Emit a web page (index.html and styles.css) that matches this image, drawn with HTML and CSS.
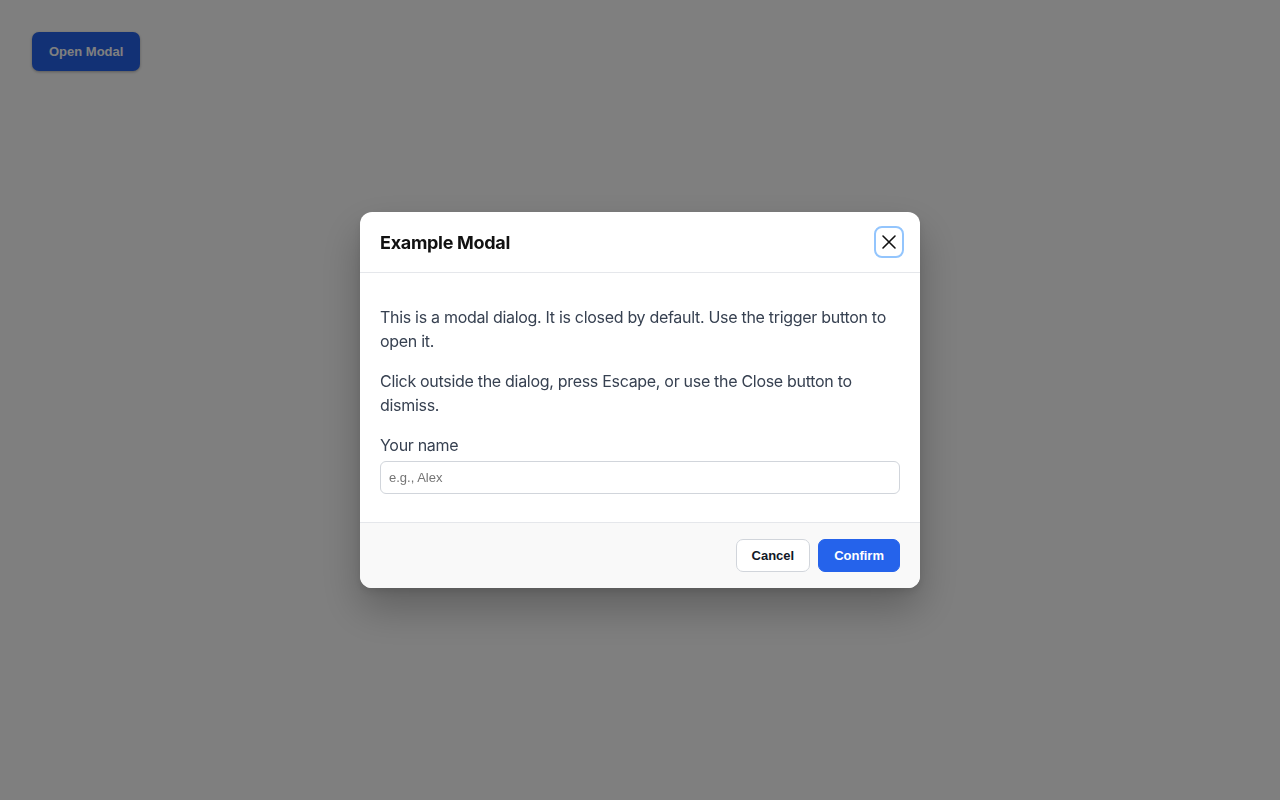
FILE: index.html
```html
<!DOCTYPE html>
<html lang="en">
  <head>
    <meta charset="UTF-8" />
    <meta name="viewport" content="width=device-width, initial-scale=1.0" />
    <title>Modal Example</title>
    <link rel="stylesheet" href="styles.css">
  </head>
  <body>
    <main class="page">
      <button class="trigger-button" type="button">Open Modal</button>
    </main>

    <div class="backdrop">
      <div class="modal" role="dialog" aria-modal="true" aria-labelledby="modal-title">
        <header class="modal-header">
          <h2 id="modal-title">Example Modal</h2>
          <button class="close-button" type="button" aria-label="Close">
            <svg width="16" height="16" viewBox="0 0 16 16" fill="none" stroke="#111" stroke-width="1.6" stroke-linecap="round">
              <path d="M2 2 L14 14 M14 2 L2 14" />
            </svg>
          </button>
        </header>

        <div class="modal-body">
          <p>This is a modal dialog. It is closed by default. Use the trigger button to open it.</p>
          <p>Click outside the dialog, press Escape, or use the Close button to dismiss.</p>
          <label for="name-input">Your name</label>
          <input type="text" id="name-input" placeholder="e.g., Alex" />
        </div>

        <footer class="modal-footer">
          <button class="btn btn-secondary" type="button">Cancel</button>
          <button class="btn btn-primary" type="button">Confirm</button>
        </footer>
      </div>
    </div>
  </body>
</html>
```

FILE: styles.css
```css
:root {
  --blue: #2563eb;
  --text: #374151;
  --border: #e5e7eb;
}

body {
  font-family: "Inter", "Liberation Sans", sans-serif;
  margin: 0;
  background-color: #ffffff;
  color: var(--text);
}

.page {
  padding: 32px;
}

.trigger-button {
  padding: 12px 17px;
  background-color: var(--blue);
  color: white;
  border: none;
  border-radius: 7px;
  font-family: "Liberation Sans", Arial, sans-serif;
  font-size: 13px;
  font-weight: bold;
  box-shadow: 0 1px 3px rgba(0, 0, 0, 0.3);
  cursor: pointer;
}

.backdrop {
  position: fixed;
  inset: 0;
  background-color: rgba(0, 0, 0, 0.5);
  display: flex;
  align-items: center;
  justify-content: center;
}

.modal {
  width: 560px;
  background-color: white;
  border-radius: 12px;
  overflow: hidden;
  box-shadow: 0 20px 40px rgba(0, 0, 0, 0.25), 0 4px 10px rgba(0, 0, 0, 0.1);
}

.modal-header {
  height: 61px;
  box-sizing: border-box;
  padding: 0 16px 0 20px;
  display: flex;
  align-items: center;
  justify-content: space-between;
  border-bottom: 1px solid var(--border);
}

.modal-header h2 {
  margin: 0;
  font-size: 18px;
  font-weight: 700;
  letter-spacing: -0.3px;
  color: #111;
}

.close-button {
  width: 30px;
  height: 32px;
  padding: 0;
  display: flex;
  align-items: center;
  justify-content: center;
  background: white;
  border: 2px solid #93c5fd;
  border-radius: 8px;
  cursor: pointer;
}

.modal-body {
  padding: 16px 20px 28px;
  letter-spacing: -0.3px;
}

.modal-body p {
  margin: 16px 0;
  font-size: 16px;
  line-height: 24px;
}

.modal-body label {
  display: block;
  font-size: 16px;
  line-height: 24px;
  margin-bottom: 4px;
}

#name-input {
  display: block;
  width: 100%;
  box-sizing: border-box;
  height: 33px;
  padding: 0 8px;
  border: 1px solid #d1d5db;
  border-radius: 6px;
  font-family: "Liberation Sans", Arial, sans-serif;
  font-size: 13px;
  letter-spacing: 0;
  color: #111;
}

#name-input::placeholder {
  color: #757575;
}

.modal-footer {
  display: flex;
  justify-content: flex-end;
  gap: 8px;
  padding: 16px 20px;
  background-color: #f9f9f9;
  border-top: 1px solid var(--border);
}

.btn {
  height: 33px;
  padding: 0 15px;
  border-radius: 7px;
  font-family: "Liberation Sans", Arial, sans-serif;
  font-size: 13px;
  font-weight: bold;
  cursor: pointer;
}

.btn-secondary {
  background-color: white;
  color: #111827;
  border: 1px solid #d1d5db;
}

.btn-primary {
  background-color: var(--blue);
  color: white;
  border: 1px solid var(--blue);
}
```
